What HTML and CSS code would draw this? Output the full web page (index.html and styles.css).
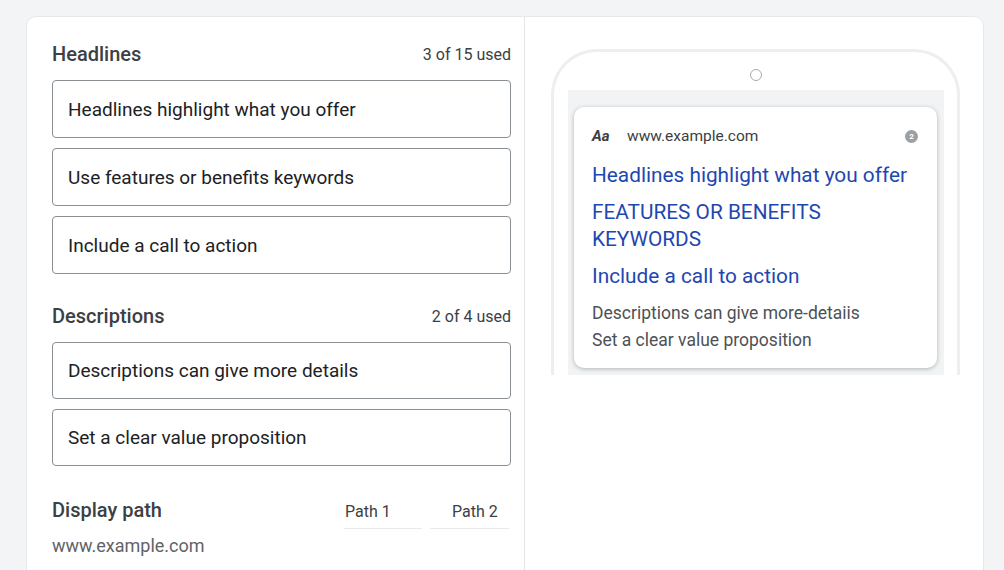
FILE: index.html
```html
<!DOCTYPE html>
<html lang="en">
<head>
  <meta charset="UTF-8" />
  <meta name="viewport" content="width=device-width, initial-scale=1" />
  <title>Responsive search ad</title>
  <link rel="stylesheet" href="styles.css">
</head>
<body>
  <div class="painel">
    <div class="coluna-campos">
      <div class="secao-topo">
        <div class="secao-titulo">Headlines</div>
        <div class="contador">3 of 15 used</div>
      </div>
      <div class="campo">Headlines highlight what you offer</div>
      <div class="campo">Use features or benefits keywords</div>
      <div class="campo">Include a call to action</div>

      <div class="secao-topo secao-espaco">
        <div class="secao-titulo">Descriptions</div>
        <div class="contador">2 of 4 used</div>
      </div>
      <div class="campo campo-desc">Descriptions can give more details</div>
      <div class="campo campo-desc">Set a clear value proposition</div>

      <div class="secao-topo secao-espaco caminho-topo">
        <div class="secao-titulo">Display path</div>
        <div class="caminhos">
          <div class="caminho">Path 1</div>
          <div class="caminho caminho-2">Path 2</div>
        </div>
      </div>
      <div class="url-base">www.example.com</div>
    </div>

    <div class="coluna-previa">
      <div class="telefone">
        <div class="camera"></div>
        <div class="tela">
          <div class="anuncio">
            <div class="anuncio-topo">
              <span class="anuncio-aa">Aa</span>
              <span class="anuncio-url">www.example.com</span>
              <span class="anuncio-badge">2</span>
            </div>
            <div class="anuncio-titulo">Headlines highlight what you offer</div>
            <div class="anuncio-titulo">FEATURES OR BENEFITS<br>KEYWORDS</div>
            <div class="anuncio-titulo">Include a call to action</div>
            <div class="anuncio-desc">Descriptions can give more-detaiis<br>Set a clear value proposition</div>
          </div>
        </div>
      </div>
    </div>
  </div>
</body>
</html>
```

FILE: styles.css
```css
body {
  font-family: Roboto, "Noto Sans", Arial, sans-serif;
  background: #f3f4f5;
  margin: 0;
  padding: 0;
  overflow: hidden;
}
.painel {
  display: flex;
  width: 958px;
  height: 600px;
  margin: 16px 0 0 26px;
  background: #fff;
  border: 1px solid #e6e8ea;
  border-radius: 10px;
  box-sizing: border-box;
}
.coluna-campos {
  width: 498px;
  padding: 23px 13px 0 25px;
  border-right: 1px solid #e3e5e8;
  box-sizing: border-box;
}
.secao-topo {
  display: flex;
  justify-content: space-between;
  align-items: center;
  height: 28px;
  margin-bottom: 12px;
}
.secao-espaco {
  margin-top: 28px;
}
.secao-titulo {
  font-size: 20px;
  font-weight: 500;
  color: #3c4043;
}
.contador {
  font-size: 16px;
  color: #3c4043;
}
.campo {
  height: 58px;
  border: 1px solid #8a8f94;
  border-radius: 4px;
  box-sizing: border-box;
  padding: 0 15px;
  display: flex;
  align-items: center;
  font-size: 19px;
  color: #202124;
  margin-bottom: 10px;
}
.campo-desc {
  height: 57px;
}
.caminho-topo {
  margin-top: 30px;
  margin-bottom: 11px;
}
.caminhos {
  display: flex;
  gap: 8px;
  align-self: flex-start;
  margin-right: 2px;
}
.caminho {
  width: 77px;
  font-size: 16px;
  color: #3c4043;
  padding: 6px 0 7px 1px;
  border-bottom: 1px solid #e8eaed;
}
.caminho-2 {
  width: 57px;
  padding-left: 22px;
}
.url-base {
  font-size: 18px;
  color: #5f6368;
}
.coluna-previa {
  flex: 1;
  padding: 32px 0 0 26px;
}
.telefone {
  width: 409px;
  height: 326px;
  border: 3px solid #eceef0;
  border-bottom: none;
  border-radius: 46px 46px 0 0;
  box-sizing: border-box;
  padding: 0 13px 0 14px;
  display: flex;
  flex-direction: column;
}
.camera {
  width: 12px;
  height: 12px;
  border: 1.5px solid #a5aaaf;
  border-radius: 50%;
  box-sizing: border-box;
  margin: 17px auto 9px;
}
.tela {
  flex: 1;
  background: #f1f3f4;
  padding: 17px 7px 6px 6px;
}
.anuncio {
  background: #fff;
  border-radius: 10px;
  box-shadow: 0 1px 4px rgba(60, 64, 67, 0.35);
  padding: 19px 19px 14px 18px;
}
.anuncio-topo {
  display: flex;
  align-items: center;
  height: 20px;
  margin-bottom: 16px;
}
.anuncio-aa {
  font-size: 15px;
  font-weight: bold;
  font-style: italic;
  color: #3c4043;
  width: 35px;
}
.anuncio-url {
  flex: 1;
  font-size: 15.5px;
  color: #3c4043;
}
.anuncio-badge {
  width: 13px;
  height: 13px;
  border-radius: 50%;
  background: #9aa0a6;
  color: #fff;
  font-size: 8px;
  font-weight: bold;
  display: flex;
  align-items: center;
  justify-content: center;
}
.anuncio-titulo {
  font-size: 20.8px;
  line-height: 27px;
  color: #1f47b0;
  margin-bottom: 10px;
}
.anuncio-desc {
  font-size: 17.5px;
  line-height: 27px;
  color: #4d5156;
}
```
